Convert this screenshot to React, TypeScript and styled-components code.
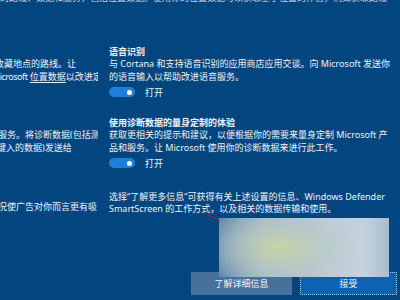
import styled, { createGlobalStyle } from "styled-components";

const GlobalStyle = createGlobalStyle`
  html, body {
    margin: 0;
    padding: 0;
    background: #03467f;
  }
`;

const Page = styled.div`
  position: relative;
  width: 400px;
  height: 300px;
  overflow: hidden;
  background: #03467f;
  color: #eef3f8;
  font-family: "Noto Sans", "Noto Sans CJK SC", sans-serif;
  font-size: 9px;
  display: flex;
  flex-direction: column;
`;

const TopLine = styled.div`
  margin-top: -9px;
  height: 13px;
  line-height: 13px;
  white-space: nowrap;
  color: #c9d7e6;
`;

const Columns = styled.div`
  flex: 1;
  display: grid;
  grid-template-columns: 98px 1fr;
  column-gap: 11px;
  padding-top: 42px;
`;

const LeftCol = styled.div`
  overflow: hidden;
  display: flex;
  flex-direction: column;
`;

const LeftBlock = styled.div<{ $top: number }>`
  margin-top: ${(p) => p.$top}px;
`;

const LeftLine = styled.div<{ $shift?: number }>`
  line-height: 13px;
  white-space: nowrap;
  margin-left: ${(p) => -(p.$shift ?? 0)}px;
`;

const Latin = styled.span`
  letter-spacing: -0.5px;
`;

const Link = styled.span`
  text-decoration: underline;
  text-underline-offset: 2px;
`;

const RightCol = styled.div`
  display: flex;
  flex-direction: column;
  padding-right: 10px;
`;

const Title = styled.div<{ $top?: number }>`
  margin-top: ${(p) => p.$top ?? 0}px;
  line-height: 11px;
  font-weight: 700;
`;

const Body = styled.div<{ $top?: number; $lh?: number }>`
  margin-top: ${(p) => p.$top ?? 0}px;
  line-height: ${(p) => p.$lh ?? 13}px;
`;

const ToggleRow = styled.div`
  margin-top: 4px;
  height: 10px;
  display: flex;
  align-items: center;
  gap: 10px;
`;

const Switch = styled.div`
  width: 26px;
  height: 10px;
  border-radius: 5px;
  background: #1d7fdb;
  display: flex;
  align-items: center;
  justify-content: flex-end;
  padding-right: 3px;
  box-sizing: border-box;
`;

const Knob = styled.div`
  width: 5px;
  height: 5px;
  border-radius: 50%;
  background: #ffffff;
`;

const Footer = styled.div`
  display: flex;
  justify-content: flex-end;
  gap: 8px;
  padding: 0 3px 5px 0;
`;

const Button = styled.div<{ $primary?: boolean }>`
  height: 23px;
  box-sizing: border-box;
  display: flex;
  align-items: center;
  justify-content: center;
  font-size: 9px;
  color: #f2f6fa;
  width: ${(p) => (p.$primary ? 97 : 101)}px;
  background: ${(p) => (p.$primary ? "#0d63b2" : "#47709a")};
  border: ${(p) => (p.$primary ? "1px dotted #a9c8ea" : "none")};
`;

const Blur = styled.div`
  position: absolute;
  left: 219px;
  top: 218px;
  width: 170px;
  height: 59px;
  background:
    radial-gradient(ellipse 60% 90% at 35% 50%, rgba(200, 212, 168, 0.95) 0%, rgba(184, 202, 196, 0.6) 45%, rgba(184, 202, 214, 0) 80%),
    linear-gradient(to right, #5f86ac 0%, #9fb6c6 25%, #bccbd6 60%, #c6d3de 85%, #a9bccd 100%);
`;

const Arrow = styled.svg`
  position: absolute;
  left: 204px;
  top: 212px;
`;

export default function App() {
  return (
    <>
      <GlobalStyle />
      <Page>
        <TopLine>
          的路线、数据和服务，包括位置数据。使用你的位置数据可以获取基于位置的体验，例如获取路线
        </TopLine>
        <Columns>
          <LeftCol>
            <LeftBlock $top={11}>
              <LeftLine $shift={5}>收藏地点的路线。让</LeftLine>
              <LeftLine $shift={8}>
                <Latin>Microsoft</Latin> <Link>位置数据</Link>以改进定
              </LeftLine>
            </LeftBlock>
            <LeftBlock $top={45}>
              <LeftLine $shift={2}>服务。将诊断数据(包括测</LeftLine>
              <LeftLine $shift={3}>键入的数据)发送给</LeftLine>
            </LeftBlock>
            <LeftBlock $top={46}>
              <LeftLine $shift={2}>况使广告对你而言更有吸</LeftLine>
            </LeftBlock>
          </LeftCol>
          <RightCol>
            <Title>语音识别</Title>
            <Body>
              与 Cortana 和支持语音识别的应用商店应用交谈。向 Microsoft 发送你的语音输入以帮助改进语音服务。
            </Body>
            <ToggleRow>
              <Switch>
                <Knob />
              </Switch>
              打开
            </ToggleRow>
            <Title $top={20}>使用诊断数据的量身定制的体验</Title>
            <Body>
              获取更相关的提示和建议，以便根据你的需要来量身定制 Microsoft 产品和服务。让 Microsoft 使用你的诊断数据来进行此工作。
            </Body>
            <ToggleRow>
              <Switch>
                <Knob />
              </Switch>
              打开
            </ToggleRow>
            <Body $top={23} $lh={12}>
              选择“了解更多信息”可获得有关上述设置的信息、Windows Defender SmartScreen 的工作方式，以及相关的数据传输和使用。
            </Body>
          </RightCol>
        </Columns>
        <Footer>
          <Button>了解详细信息</Button>
          <Button $primary>接受</Button>
        </Footer>
        <Arrow width="18" height="12" viewBox="0 0 18 12">
          <line x1="1" y1="1" x2="16" y2="9" stroke="#9b1c3c" strokeWidth="1.3" />
        </Arrow>
        <Blur />
      </Page>
    </>
  );
}
